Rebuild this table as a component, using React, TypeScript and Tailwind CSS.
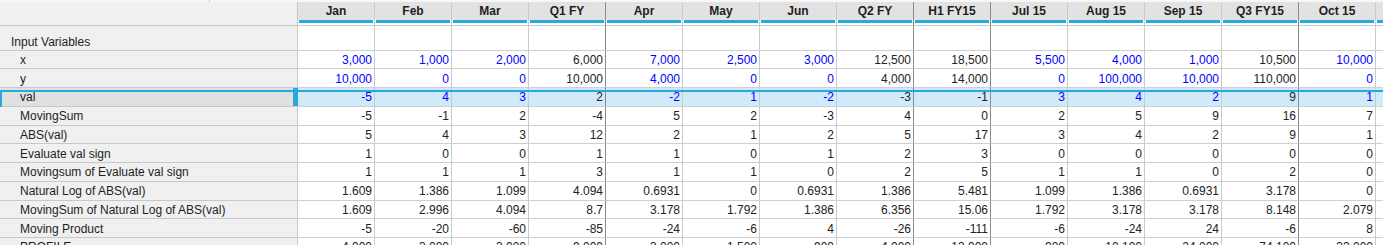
import React from 'react';

type Col = { name: string; agg?: boolean };

type RowDef = {
  label: string;
  values: string[];
  input?: boolean;
  selected?: boolean;
};

const cols: Col[] = [
  { name: 'Jan' },
  { name: 'Feb' },
  { name: 'Mar' },
  { name: 'Q1 FY', agg: true },
  { name: 'Apr' },
  { name: 'May' },
  { name: 'Jun' },
  { name: 'Q2 FY', agg: true },
  { name: 'H1 FY15', agg: true },
  { name: 'Jul 15' },
  { name: 'Aug 15' },
  { name: 'Sep 15' },
  { name: 'Q3 FY15', agg: true },
  { name: 'Oct 15' },
  { name: '' }, // next column, cut off by the window
];

const rows: RowDef[] = [
  { label: 'x', input: true, values: ['3,000', '1,000', '2,000', '6,000', '7,000', '2,500', '3,000', '12,500', '18,500', '5,500', '4,000', '1,000', '10,500', '10,000', ''] },
  { label: 'y', input: true, values: ['10,000', '0', '0', '10,000', '4,000', '0', '0', '4,000', '14,000', '0', '100,000', '10,000', '110,000', '0', ''] },
  { label: 'val', input: true, selected: true, values: ['-5', '4', '3', '2', '-2', '1', '-2', '-3', '-1', '3', '4', '2', '9', '1', ''] },
  { label: 'MovingSum', values: ['-5', '-1', '2', '-4', '5', '2', '-3', '4', '0', '2', '5', '9', '16', '7', ''] },
  { label: 'ABS(val)', values: ['5', '4', '3', '12', '2', '1', '2', '5', '17', '3', '4', '2', '9', '1', ''] },
  { label: 'Evaluate val sign', values: ['1', '0', '0', '1', '1', '0', '1', '2', '3', '0', '0', '0', '0', '0', ''] },
  { label: 'Movingsum of Evaluate val sign', values: ['1', '1', '1', '3', '1', '1', '0', '2', '5', '1', '1', '0', '2', '0', ''] },
  { label: 'Natural Log of ABS(val)', values: ['1.609', '1.386', '1.099', '4.094', '0.6931', '0', '0.6931', '1.386', '5.481', '1.099', '1.386', '0.6931', '3.178', '0', ''] },
  { label: 'MovingSum of Natural Log of ABS(val)', values: ['1.609', '2.996', '4.094', '8.7', '3.178', '1.792', '1.386', '6.356', '15.06', '1.792', '3.178', '3.178', '8.148', '2.079', ''] },
  { label: 'Moving Product', values: ['-5', '-20', '-60', '-85', '-24', '-6', '4', '-26', '-111', '-6', '-24', '24', '-6', '8', ''] },
  { label: 'PROFILE', values: ['4,000', '3,000', '3,000', '9,000', '3,000', '1,500', '900', '4,000', '13,000', '900', '10,100', '24,000', '74,100', '33,000', ''] },
];

const HeaderRow = () => (
  <div className="flex h-[24px] shrink-0">
    <div className="w-[298px] shrink-0 border-b border-r border-[#c8c8c8] bg-[#f0f0f0]" />
    {cols.map((c, i) => (
      <div
        key={i}
        className={`flex w-[77px] shrink-0 flex-col border-b border-r border-b-[#c8c8c8] ${c.agg ? 'border-r-[#8a8a8a]' : 'border-r-[#cacaca]'}`}
      >
        <div className="flex h-[18px] items-center justify-center bg-[#e2e2e2] text-[12px] font-bold text-[#1e1e1e]">
          {c.name}
        </div>
        <div className="mx-[1px] h-[3px] bg-[#29a8e0]" />
        <div className="flex-1 bg-white" />
      </div>
    ))}
  </div>
);

const InputRow = () => (
  <div className="flex h-[24.5px] shrink-0">
    <div className="flex w-[298px] shrink-0 items-end border-b border-r border-[#c8c8c8] bg-[#f0f0f0] pb-[2px] pl-[11px] text-[12px] leading-[12px] text-[#1e1e1e]">
      Input Variables
    </div>
    {cols.map((c, i) => (
      <div
        key={i}
        className={`w-[77px] shrink-0 border-b border-r border-b-[#cfcfcf] bg-white ${c.agg ? 'border-r-[#8a8a8a]' : 'border-r-[#cacaca]'}`}
      />
    ))}
  </div>
);

const DataRow = ({ row }: { row: RowDef }) => (
  <div className="relative flex h-[18.75px] shrink-0">
    {row.selected ? (
      <div className="flex w-[298px] shrink-0 border-b border-[#c8c8c8]">
        <div className="flex flex-1 items-center bg-[#e0e0e0] pl-[20px] pt-[1px] text-[12px] text-[#1e1e1e]">
          {row.label}
        </div>
        <div className="w-[5px] bg-[#29a8e0]" />
      </div>
    ) : (
      <div className="flex w-[298px] shrink-0 items-center border-b border-r border-[#c8c8c8] bg-[#f0f0f0] pl-[20px] pt-[1px] text-[12px] text-[#1e1e1e]">
        {row.label}
      </div>
    )}
    {cols.map((c, i) => (
      <div
        key={i}
        className={`flex w-[77px] shrink-0 items-center justify-end border-b border-r border-b-[#cfcfcf] pr-[2px] pt-[1px] text-[12px] ${
          c.agg ? 'border-r-[#8a8a8a]' : 'border-r-[#cacaca]'
        } ${row.selected ? 'bg-[#d0eafa]' : 'bg-white'} ${row.input && !c.agg ? 'text-[#0000ff]' : 'text-[#222222]'}`}
      >
        {row.values[i]}
      </div>
    ))}
    {row.selected && (
      <div className="pointer-events-none absolute -bottom-[2.75px] left-0 right-[-4px] top-[1.5px] border-2 border-[#29a8e0]" />
    )}
  </div>
);

export default function App() {
  return (
    <div className="h-[245px] w-[1383px] overflow-hidden bg-white font-['Liberation_Sans',Arial,sans-serif]">
      <div className="flex h-[2px] bg-[#f7f7f7]">
        <div className="ml-[209px] w-px bg-[#c4c4c4]" />
      </div>
      <HeaderRow />
      <InputRow />
      {rows.map(r => (
        <DataRow key={r.label} row={r} />
      ))}
    </div>
  );
}
